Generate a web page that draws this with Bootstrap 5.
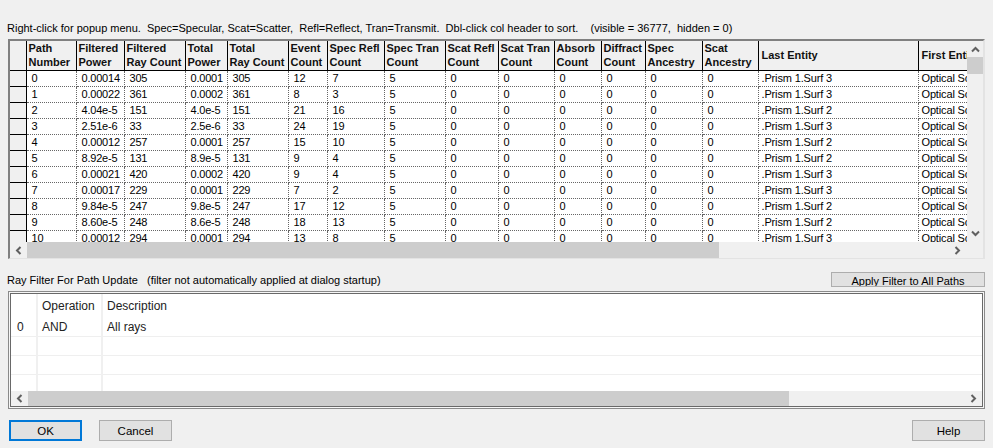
<!DOCTYPE html>
<html lang="en"><head><meta charset="utf-8"><title>Path Sort</title>
<link href="https://cdn.jsdelivr.net/npm/bootstrap@5.3.0/dist/css/bootstrap.min.css" rel="stylesheet">
<style>
html,body{height:448px;overflow:hidden}
body{background:#f0f0f0;font:11px/1.2 "Liberation Sans",Arial,sans-serif;color:#000}
.dlg{width:993px;height:448px;padding:21px 8px 0 8px}
.hint{height:18px;line-height:14px;white-space:pre;margin-left:-1px}
.gridbox{width:977px;height:220px;border-style:solid;border-width:2px 2px 1px 2px;border-color:#808080 #e3e3e3 #e3e3e3 #808080;display:grid;grid-template-columns:957px 16px;grid-template-rows:201px 16px;background:#f0f0f0}
.viewport{overflow:hidden;background:#fff;grid-column:1;grid-row:1}
.ptable{table-layout:fixed;width:957px;border-collapse:collapse;font-size:11px;margin:0}
.ptable col:nth-child(1){width:16px}.ptable col:nth-child(2){width:50px}.ptable col:nth-child(3){width:48px}.ptable col:nth-child(4){width:61px}.ptable col:nth-child(5){width:42px}.ptable col:nth-child(6){width:61px}.ptable col:nth-child(7){width:39px}.ptable col:nth-child(8){width:57px}.ptable col:nth-child(9){width:61px}.ptable col:nth-child(10){width:53px}.ptable col:nth-child(11){width:56px}.ptable col:nth-child(12){width:47px}.ptable col:nth-child(13){width:44px}.ptable col:nth-child(14){width:57px}.ptable col:nth-child(15){width:56px}.ptable col:nth-child(16){width:160px}.ptable col:nth-child(17){width:49px}
.ptable th{background:#f0f0f0;font-weight:700;height:29px;padding:0 2px;line-height:14px;border-right:1px solid #000;border-bottom:1px solid #000;vertical-align:middle;white-space:nowrap;overflow:hidden;color:#111}
.ptable th.thx{padding-left:3px}
.ptable td{height:16px;padding:0 0 0 5px;line-height:15px;letter-spacing:-.2px;border-right:1px dotted #666;border-bottom:1px dotted #666;white-space:nowrap;overflow:hidden;background:#fff}
.ptable td.tx{padding-left:3px;letter-spacing:-.15px}
.ptable td:last-child,.ptable th:last-child{border-right:0}
.ptable td.rh{background:#f0f0f0;border-right:1px solid #000;border-bottom:1px solid #000;padding:0}
.sb{background:#f0f0f0;position:relative}
.sb-thumb{position:absolute;background:#cdcdcd}
.arr{position:absolute;width:9px;height:9px}
.vbar{grid-column:2;grid-row:1}
.hbar{grid-column:1;grid-row:2}
.th-v{left:0;right:0;top:16px;height:17px}
.th-h{left:17px;top:0;bottom:0;width:692px}
.th-h2{left:17px;top:0;bottom:0;width:761px}
.a-up{left:4px;top:4px}.a-dn{left:4px;bottom:4px}
.a-l{left:4px;top:4px}.a-r{right:5px;top:4px}
.a-l2{left:4px;top:3px}.a-r2{right:4px;top:3px}
.arr path{fill:none;stroke:#606060;stroke-width:2}
.filt{height:19px;margin-top:13px;width:977px}
.filt span{white-space:pre;margin:2px 0 0 -1px}
.wbtn{background:#e1e1e1;border:1px solid #adadad;border-radius:0;color:#000;font-size:11px;padding:0;line-height:14px;text-align:center}
.wbtn:hover{background:#e1e1e1;border-color:#adadad;color:#000}
.applyb{width:154px;height:15px;overflow:hidden;line-height:16px;padding-bottom:2px}
.box2{width:977px;height:118px;border:1px solid #8a8a8a;padding:1px;background:#f6f6f6}
.box2in{border:1px solid #696969;height:114px;background:#f0f0f0;display:grid;grid-template-rows:97px 15px}
.v2{background:#fff;overflow:hidden}
.t2{table-layout:fixed;width:100%;border-collapse:collapse;font:12px "Liberation Sans",Arial,sans-serif;color:#222;margin:0}
.t2 col:nth-child(1){width:26px}.t2 col:nth-child(2){width:65px}
.t2 td,.t2 th{font-weight:400;padding:0 0 0 4px;height:19px;border-right:2px solid #f0f0f0;border-bottom:1px solid #efefef;overflow:hidden;white-space:nowrap}
.t2 td{padding-top:1px}
.t2 th{height:23px;border-bottom:0;background:#fff}
.t2 td:first-child{padding-left:6px}
.t2 td:last-child,.t2 th:last-child{border-right:0}
.foot{margin-top:11px;width:977px}
.btnrow{gap:17px;padding-left:1px}
.dbtn{width:73px;height:21px;font-size:11.5px;line-height:19px;padding-top:1px}
.okb{border:2px solid #0078d7;line-height:17px}
</style></head><body>
<div class="dlg">
<div class="hint">Right-click for popup menu.  Spec=Specular, Scat=Scatter,  Refl=Reflect, Tran=Transmit.  Dbl-click col header to sort.    (visible = 36777,  hidden = 0)</div>
<div class="gridbox">
 <div class="viewport">
  <table class="ptable"><colgroup><col><col><col><col><col><col><col><col><col><col><col><col><col><col><col><col><col></colgroup>
   <thead><tr><th class="rh"></th><th>Path<br>Number</th><th>Filtered<br>Power</th><th>Filtered<br>Ray Count</th><th>Total<br>Power</th><th>Total<br>Ray Count</th><th>Event<br>Count</th><th>Spec Refl<br>Count</th><th>Spec Tran<br>Count</th><th>Scat Refl<br>Count</th><th>Scat Tran<br>Count</th><th>Absorb<br>Count</th><th>Diffract<br>Count</th><th>Spec<br>Ancestry</th><th>Scat<br>Ancestry</th><th class="thx">Last Entity</th><th class="thx">First Entity</th></tr></thead>
   <tbody>
<tr><td class="rh"></td><td>0</td><td>0.00014</td><td>305</td><td>0.0001</td><td>305</td><td>12</td><td>7</td><td>5</td><td>0</td><td>0</td><td>0</td><td>0</td><td>0</td><td>0</td><td class="tx">.Prism 1.Surf 3</td><td class="tx">Optical Source</td></tr>
<tr><td class="rh"></td><td>1</td><td>0.00022</td><td>361</td><td>0.0002</td><td>361</td><td>8</td><td>3</td><td>5</td><td>0</td><td>0</td><td>0</td><td>0</td><td>0</td><td>0</td><td class="tx">.Prism 1.Surf 3</td><td class="tx">Optical Source</td></tr>
<tr><td class="rh"></td><td>2</td><td>4.04e-5</td><td>151</td><td>4.0e-5</td><td>151</td><td>21</td><td>16</td><td>5</td><td>0</td><td>0</td><td>0</td><td>0</td><td>0</td><td>0</td><td class="tx">.Prism 1.Surf 2</td><td class="tx">Optical Source</td></tr>
<tr><td class="rh"></td><td>3</td><td>2.51e-6</td><td>33</td><td>2.5e-6</td><td>33</td><td>24</td><td>19</td><td>5</td><td>0</td><td>0</td><td>0</td><td>0</td><td>0</td><td>0</td><td class="tx">.Prism 1.Surf 3</td><td class="tx">Optical Source</td></tr>
<tr><td class="rh"></td><td>4</td><td>0.00012</td><td>257</td><td>0.0001</td><td>257</td><td>15</td><td>10</td><td>5</td><td>0</td><td>0</td><td>0</td><td>0</td><td>0</td><td>0</td><td class="tx">.Prism 1.Surf 2</td><td class="tx">Optical Source</td></tr>
<tr><td class="rh"></td><td>5</td><td>8.92e-5</td><td>131</td><td>8.9e-5</td><td>131</td><td>9</td><td>4</td><td>5</td><td>0</td><td>0</td><td>0</td><td>0</td><td>0</td><td>0</td><td class="tx">.Prism 1.Surf 2</td><td class="tx">Optical Source</td></tr>
<tr><td class="rh"></td><td>6</td><td>0.00021</td><td>420</td><td>0.0002</td><td>420</td><td>9</td><td>4</td><td>5</td><td>0</td><td>0</td><td>0</td><td>0</td><td>0</td><td>0</td><td class="tx">.Prism 1.Surf 3</td><td class="tx">Optical Source</td></tr>
<tr><td class="rh"></td><td>7</td><td>0.00017</td><td>229</td><td>0.0001</td><td>229</td><td>7</td><td>2</td><td>5</td><td>0</td><td>0</td><td>0</td><td>0</td><td>0</td><td>0</td><td class="tx">.Prism 1.Surf 3</td><td class="tx">Optical Source</td></tr>
<tr><td class="rh"></td><td>8</td><td>9.84e-5</td><td>247</td><td>9.8e-5</td><td>247</td><td>17</td><td>12</td><td>5</td><td>0</td><td>0</td><td>0</td><td>0</td><td>0</td><td>0</td><td class="tx">.Prism 1.Surf 2</td><td class="tx">Optical Source</td></tr>
<tr><td class="rh"></td><td>9</td><td>8.60e-5</td><td>248</td><td>8.6e-5</td><td>248</td><td>18</td><td>13</td><td>5</td><td>0</td><td>0</td><td>0</td><td>0</td><td>0</td><td>0</td><td class="tx">.Prism 1.Surf 2</td><td class="tx">Optical Source</td></tr>
<tr><td class="rh"></td><td>10</td><td>0.00012</td><td>294</td><td>0.0001</td><td>294</td><td>13</td><td>8</td><td>5</td><td>0</td><td>0</td><td>0</td><td>0</td><td>0</td><td>0</td><td class="tx">.Prism 1.Surf 3</td><td class="tx">Optical Source</td></tr>
   </tbody></table>
 </div>
 <div class="sb vbar"><div class="sb-thumb th-v"></div>
  <svg class="arr a-up" viewBox="0 0 9 9"><path d="M1 6.5 4.5 3 8 6.5"/></svg>
  <svg class="arr a-dn" viewBox="0 0 9 9"><path d="M1 2.5 4.5 6 8 2.5"/></svg></div>
 <div class="sb hbar"><div class="sb-thumb th-h"></div>
  <svg class="arr a-l" viewBox="0 0 9 9"><path d="M6.5 1 3 4.5 6.5 8"/></svg>
  <svg class="arr a-r" viewBox="0 0 9 9"><path d="M2.5 1 6 4.5 2.5 8"/></svg></div>
</div>
<div class="filt d-flex align-items-start justify-content-between"><span>Ray Filter For Path Update   (filter not automatically applied at dialog startup)</span><button type="button" class="btn wbtn applyb">Apply Filter to All Paths</button></div>
<div class="box2"><div class="box2in">
 <div class="v2"><table class="t2"><colgroup><col><col><col></colgroup>
  <tr><th></th><th>Operation</th><th>Description</th></tr>
  <tr><td>0</td><td>AND</td><td>All rays</td></tr>
  <tr><td></td><td></td><td></td></tr><tr><td></td><td></td><td></td></tr><tr><td></td><td></td><td></td></tr>
 </table></div>
 <div class="sb"><div class="sb-thumb th-h2"></div>
  <svg class="arr a-l2" viewBox="0 0 9 9"><path d="M6.5 1 3 4.5 6.5 8"/></svg>
  <svg class="arr a-r2" viewBox="0 0 9 9"><path d="M2.5 1 6 4.5 2.5 8"/></svg></div>
</div></div>
<div class="foot d-flex justify-content-between"><div class="btnrow d-flex"><button type="button" class="btn wbtn dbtn okb">OK</button><button type="button" class="btn wbtn dbtn">Cancel</button></div><button type="button" class="btn wbtn dbtn">Help</button></div>
</div>
</body></html>
